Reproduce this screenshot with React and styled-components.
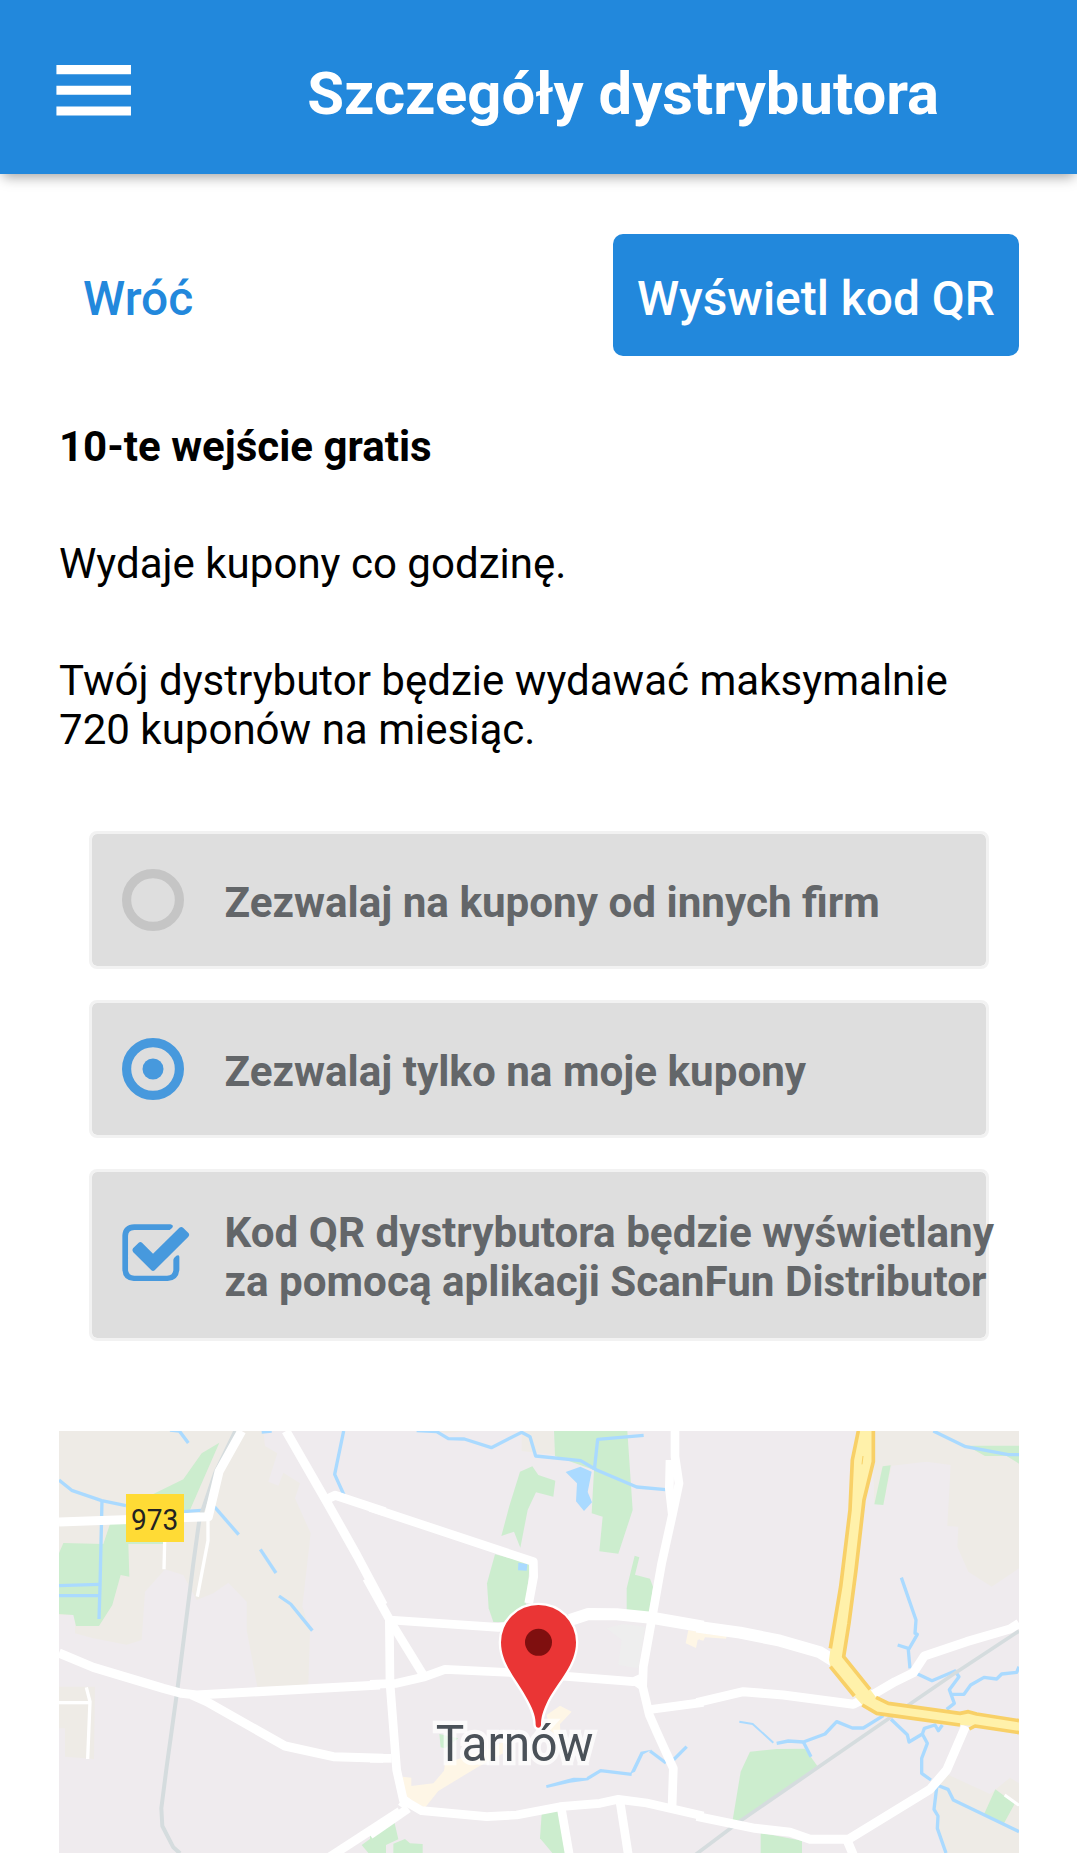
import React from "react";
import styled, { createGlobalStyle, css } from "styled-components";

const GlobalStyle = createGlobalStyle`
  *, *::before, *::after { box-sizing: border-box; }
  body {
    margin: 0;
    background: #fff;
    color: #000;
    font-family: Roboto, "Liberation Sans", sans-serif;
    overflow: hidden;
  }
`;

const BLUE = "#2288dc";

const Screen = styled.div`
  width: 1077px;
  height: 1853px;
  overflow: hidden;
  display: flex;
  flex-direction: column;
  background: #fff;
`;

const AppBar = styled.header`
  flex: none;
  height: 174px;
  padding: 13px 140px 0 44px;
  display: flex;
  align-items: center;
  background: ${BLUE};
  box-shadow: 0 6px 12px -3px rgba(0, 0, 0, 0.36);
`;

const MenuButton = styled.button`
  display: flex;
  width: 99.4px;
  height: 99.4px;
  margin: 0 0 6px;
  padding: 0;
  border: 0;
  background: none;
  color: #fff;
`;

const Title = styled.h1`
  margin: 0 0 0 163.8px;
  font-size: 59.8px;
  line-height: 70px;
  font-weight: 700;
  color: #fff;
  white-space: nowrap;
`;

const Content = styled.main`
  flex: none;
  padding: 60px 58px 0 59px;
  display: flex;
  flex-direction: column;
`;

const Actions = styled.div`
  display: flex;
  justify-content: space-between;
  margin-bottom: 66.3px;
`;

const Button = styled.button`
  height: 121.7px;
  padding: 8px 24px 0;
  border: 0;
  border-radius: 10px;
  font: 500 47.9px/56px Roboto, "Liberation Sans", sans-serif;
  white-space: nowrap;
  ${({ $primary }) =>
    $primary
      ? css`
          background: ${BLUE};
          color: #fff;
        `
      : css`
          background: transparent;
          color: ${BLUE};
        `}
`;

const Text = styled.p`
  margin: 0 0 68px;
  font-size: 42.05px;
  line-height: 49px;
  font-weight: ${({ $bold }) => ($bold ? 700 : 400)};
`;

const Options = styled.div`
  display: flex;
  flex-direction: column;
  gap: 31px;
  margin: 9.3px 30px 90px;
`;

const Option = styled.div`
  height: ${({ $tall }) => ($tall ? "172px" : "138px")};
  border: 3px solid #f2f2f2;
  border-radius: 8px;
  background: #dedede;
  background-clip: padding-box;
  display: flex;
  align-items: center;
  padding-left: 30px;
`;

const OptionIcon = styled.span`
  flex: none;
  display: flex;
  width: 102.5px;
  color: ${({ $muted }) => ($muted ? "#c5c5c5" : "#4799dd")};
  ${({ $raised }) => $raised && "padding-bottom: 5px;"}
`;

const OptionLabel = styled.span`
  padding-top: 4px;
  font-size: 42.2px;
  line-height: 49px;
  font-weight: 700;
  color: #636669;
  white-space: pre;
`;

const MapFrame = styled.section`
  height: 422px;
  overflow: hidden;
  background: #efebee;

  svg {
    display: block;
  }
`;

const MenuIcon = () => (
  <svg width="99.4" height="99.4" viewBox="0 0 24 24" fill="currentColor">
    <path d="M3 18h18v-2.2H3V18zm0-5h18v-2.2H3V13zm0-7.2V8h18V5.8H3z" />
  </svg>
);

const RadioIcon = ({ checked }) => (
  <svg width="62" height="62" viewBox="0 0 62 62">
    <circle cx="31" cy="31" r="26.4" fill="none" stroke="currentColor" strokeWidth="9.2" />
    {checked && <circle cx="31" cy="31" r="10.5" fill="currentColor" />}
  </svg>
);

const CheckIcon = () => (
  <svg width="67.4" height="57" viewBox="113 42 202 171" fill="currentColor" overflow="visible">
    <path d="M256 60H150Q131 60 131 78V178Q131 197 150 197H248Q267 197 267 178V149Q268 143 276 137Q284 133 285 140V178Q283 211 250 213H148Q115 211 114 178V76Q116 43 150 42.500H258Q270 45 263 54Z" />
    <path d="M146 115L163 98Q168 94 173 98L206 131L285 53Q291 49 296 53L313 70Q317 75 312 80L211 181Q206 185 201 181L146 126Q142 120 146 115Z" />
  </svg>
);

/* Horizontal origins of the west, centre and east sheets of the map. */
const WEST = -27;
const CENTRE = 933;
const EAST = 1923;

const Land = ({ x, color, areas }) => (
  <g transform={`translate(${x} 0)`} fill={color}>
    {areas.map((points) => (
      <polygon key={points} points={points} />
    ))}
  </g>
);

const Lines = ({ x, color, width, paths }) => (
  <g
    transform={`translate(${x} 0)`}
    fill="none"
    stroke={color}
    strokeWidth={width}
    strokeLinejoin="round"
  >
    {paths.map((points) => (
      <polyline key={points} points={points} />
    ))}
  </g>
);

const FIELD = "#eeebe6";
const PARK = "#ccedce";
const WATER = "#aadaff";
const RAIL = "#d5dcde";
const TOWN = "#fef6e6";
const EDGE = "#f8d067";

const PIN =
  "M505 555A112 112 0 0 0 393 667C393 735 445 783 474 841C492 875 497 893 497 914Q498 923 505 923Q512 923 513 914C513 893 518 875 534 841C565 783 618 735 618 667A112 112 0 0 0 505 555Z";

const CityMap = () => (
  <svg width="960" height="422" viewBox="0 33 2880 1266">
    <Land x={WEST} color={FIELD} areas={[
      "27,33 640,33 645,78 682,100 655,185 685,197 700,158 750,190 735,235 782,340 757,560 780,630 775,797 622,800 590,630 590,545 535,488 490,520 440,540 400,465 345,448 285,515 275,660 230,674 130,655 75,640 75,585 27,585",
      "27,800 135,800 132,1017 45,1010 45,925 27,925",
    ]} />
    <Land x={CENTRE} color={FIELD} areas={["455,33 550,33 555,104 455,93", "205,33 285,33 230,40"]} />
    <Land x={EAST} color={FIELD} areas={[
      "522,33 957,33 957,445 875,500 805,455 772,380 775,320 742,318 752,135 680,125 575,137 550,250 523,250 520,130",
      "735,1060 870,1122 930,1073 957,1090 957,1299 735,1299 710,1220 700,1100",
    ]} />

    <Land x={WEST} color={PARK} areas={[
      "508,68 455,100 400,178 310,222 330,290 420,270",
      "180,312 345,312 345,372 235,372 238,470 212,465 187,555 147,618 78,618 70,585 27,582 27,400 40,369 160,372",
      "990,1235 935,1275 955,1299 990,1299",
    ]} />
    <Land x={CENTRE} color={PARK} areas={[
      "552,33 772,33 788,270 745,401 688,394 698,290 665,280 672,150 555,108",
      "450,155 487,139 505,165 556,182 550,230 498,217 473,270 451,383 432,335 394,348 418,258",
      "375,403 480,430 462,606 370,606 356,565 351,490",
      "794,407 808,412 795,464 840,476 849,500 838,582 770,570 770,505",
      "515,1182 566,1172 588,1299 547,1299 510,1255",
      "0,1240 73,1205 85,1258 48,1275 48,1299 0,1299",
      "70,1271 105,1257 120,1270 158,1272 158,1299 70,1299",
      "208,942 265,955 225,985 212,982",
    ]} />
    <Land x={EAST} color={PARK} areas={[
      "548,139 572,136 550,255 523,253",
      "800,77 957,77 957,131 920,108 855,108",
      "150,995 230,987 315,986 352,1038 118,1205 98,1200 122,1055",
      "182,1238 306,1262 306,1299 182,1299",
      "886,1108 944,1151 912,1210 851,1185",
    ]} />
    <Land x={CENTRE} color="#eeeeee" areas={["710,625 760,612 825,620 805,745 745,735 755,660"]} />
    <Land x={CENTRE} color={TOWN} areas={[
      "530,885 570,857 605,875 570,912 572,960 540,930",
      "98,1070 124,1073 124,1098 190,1090 222,1052 225,1030 350,990 400,965 400,1000 325,1040 205,1113 165,1163 105,1130",
      "955,630 1005,638 1000,655 983,660 978,684 947,670",
    ]} />
    <Land x={EAST} color={TOWN} areas={["0,640 80,648 78,656 15,652 10,662 0,660"]} />

    <Lines x={WEST} color={WATER} width={10} paths={[
      "27,180 65,211 155,242 228,257",
      "400,275 455,271",
      "156,240 150,500 147,597",
      "27,497 148,493",
      "27,527 150,527",
      "360,30 388,33 415,69",
      "493,260 566,344",
      "631,388 678,459",
      "687,528 722,552 787,632",
      "635,36 665,33",
      "881,33 854,163 882,225",
    ]} />
    <Lines x={CENTRE} color={WATER} width={10} paths={[
      "140,32 200,35 235,56 283,57 364,83 455,37 480,50 497,108 632,122 680,150 800,201 887,209",
      "821,46 683,58 673,150",
      "652,1076 692,1052 785,1063",
      "840,993 888,1029",
      "910,1020 950,980",
    ]} />
    <Land x={CENTRE} color={WATER} areas={[
      "587,156 631,140 665,155 653,216 666,247 642,273 618,244 621,190",
      "445,428 472,432 470,452 444,451",
      "528,1096 610,1073 655,1074 655,1081 600,1088 530,1104",
      "780,1062 812,995 845,989 820,1003 795,1055",
    ]} />
    <Lines x={EAST} color={WATER} width={10} paths={[
      "700,33 797,80 925,104 957,104",
      "604,473 648,600 645,640 652,643 625,690 630,745",
      "593,675 625,685",
      "648,760 696,782 765,753 777,770 748,809 763,850 740,868",
      "755,823 792,823 812,795 852,772 890,777 905,762 950,757 957,740",
      "230,970 265,963 310,966 375,942 410,905 457,924 490,924 550,887",
      "310,966 333,1010",
      "573,898 622,944 627,966 667,942 673,925 705,915 715,932 727,915",
      "667,942 682,970 665,1015 665,1060 693,1080",
      "710,1095 744,1108 760,1140 957,1235",
      "711,1095 702,1168 714,1188 712,1225 738,1299",
    ]} />
    <Lines x={EAST} color={WATER} width={6} paths={["118,905 158,912 220,968"]} />

    <Lines x={WEST} color={RAIL} width={12} paths={[
      "556,33 495,160 448,300 430,430 382,810 350,1040 334,1165 337,1218 370,1282 390,1300",
    ]} />
    <Lines x={EAST} color={RAIL} width={11} paths={["-15,1305 125,1200 350,1045 560,900 760,763 957,633"]} />

    <Lines x={WEST} color="#fff" width={10} paths={[
      "474,300 474,362 442,530",
      "344,365 342,448",
      "27,848 120,848",
      "109,802 120,845 113,1017",
    ]} />
    <Lines x={WEST} color="#fff" width={27} paths={[
      "575,33 507,155 475,290 27,306",
      "27,699 130,742 340,805 395,820 440,825 990,795",
      "425,825 470,845 705,978 850,1010 1000,1015",
      "708,33 830,245 920,405 1000,555",
      "825,240 855,226 1005,275",
      "840,1310 1050,1174",
    ]} />
    <Lines x={CENTRE} color="#fff" width={26} paths={[
      "0,262 490,425 491,470 476,550",
      "-10,475 62,605 160,765",
      "60,600 385,622 600,600 655,579 740,580 850,594 1000,620",
      "58,595 60,790 80,1050 100,1140 155,1172 350,1190 440,1185 570,1160 690,1150 745,1138 830,1149 1000,1188",
      "0,793 80,790 165,770 225,748 430,758 600,770 790,785 812,775",
      "0,1015 65,1015",
      "0,1245 115,1165",
      "915,33 915,110 927,190 907,285 875,430 845,600 820,740 818,800 838,885 862,940 910,1045 906,1165",
      "900,120 898,205 907,285",
      "790,780 820,800",
      "830,870 1000,847",
      "573,1160 598,1305",
      "750,1145 775,1305",
    ]} />
    <Lines x={CENTRE} color="#fff" width={36} paths={["95,1140 115,1155", "600,600 655,582 740,583 850,594 1000,620"]} />
    <Lines x={EAST} color="#fff" width={36} paths={["-10,620 120,638 240,662 360,697 400,722"]} />
    <Lines x={EAST} color="#fff" width={27} paths={[
      "-10,848 130,815 250,825 460,853 520,823 585,785 640,758 673,708 800,665 930,627 957,610",
      "-10,1189 165,1225 270,1237 330,1258 445,1258 690,1108 740,1050 797,918",
      "440,1258 460,1305",
    ]} />
    <Lines x={EAST} color="#fff" width={9} paths={["914,1125 957,1156"]} />

    <Land x={EAST} color="#fff1aa" areas={[
      "475,33 457,120 450,270 422,500 391,690 387,720 391,740 463,828 487,855 530,880 600,890 780,915 825,918 957,938 957,902 830,882 805,875 780,880 565,850 528,832 510,808 431,710 447,610 468,450 492,240 520,125 520,33",
    ]} />
    <Lines x={EAST} color={EDGE} width={11} paths={[
      "475,33 457,120 450,270 422,500 391,685",
      "391,740 463,828",
      "487,855 530,880 600,890 780,915",
      "808,927 825,918 957,938",
      "520,33 520,125 492,240 468,450 447,610 431,710 510,808",
      "528,832 565,850 780,880 805,875 830,882 957,902",
    ]} />
    <Lines x={EAST} color={EDGE} width={3} paths={["489,108 486,133"]} />

    <g transform={`translate(${WEST} 0)`}>
      <rect x="228" y="222" width="174" height="144" fill="#ffdb35" />
      <text x="243" y="329" fontFamily="Roboto, sans-serif" fontSize="86" textLength="142" lengthAdjust="spacingAndGlyphs" fill="#222">973</text>
    </g>
    <g transform={`translate(${CENTRE} 0)`}>
      <text x="197" y="1023" fontFamily="Roboto, sans-serif" fontSize="151" textLength="473" lengthAdjust="spacingAndGlyphs" fill="#4a5158" stroke="#fff" strokeOpacity="0.72" strokeWidth="26" strokeLinejoin="miter" paintOrder="stroke">Tarnów</text>
      <path d={PIN} fill="#ea3535" stroke="#fff" strokeWidth="14" paintOrder="stroke" />
      <circle cx="505.500" cy="667" r="40.500" fill="#7f0f0f" />
    </g>
  </svg>
);

export default function App() {
  return (
    <>
      <GlobalStyle />
      <Screen>
        <AppBar>
          <MenuButton aria-label="Menu">
            <MenuIcon />
          </MenuButton>
          <Title>Szczegóły dystrybutora</Title>
        </AppBar>
        <Content>
          <Actions>
            <Button>Wróć</Button>
            <Button $primary>Wyświetl kod QR</Button>
          </Actions>
          <Text $bold>10-te wejście gratis</Text>
          <Text>Wydaje kupony co godzinę.</Text>
          <Text>Twój dystrybutor będzie wydawać maksymalnie 720 kuponów na miesiąc.</Text>
          <Options>
            <Option>
              <OptionIcon $muted>
                <RadioIcon />
              </OptionIcon>
              <OptionLabel>Zezwalaj na kupony od innych firm</OptionLabel>
            </Option>
            <Option>
              <OptionIcon>
                <RadioIcon checked />
              </OptionIcon>
              <OptionLabel>Zezwalaj tylko na moje kupony</OptionLabel>
            </Option>
            <Option $tall>
              <OptionIcon $raised>
                <CheckIcon />
              </OptionIcon>
              <OptionLabel>{"Kod QR dystrybutora będzie wyświetlany\nza pomocą aplikacji ScanFun Distributor"}</OptionLabel>
            </Option>
          </Options>
          <MapFrame>
            <CityMap />
          </MapFrame>
        </Content>
      </Screen>
    </>
  );
}
